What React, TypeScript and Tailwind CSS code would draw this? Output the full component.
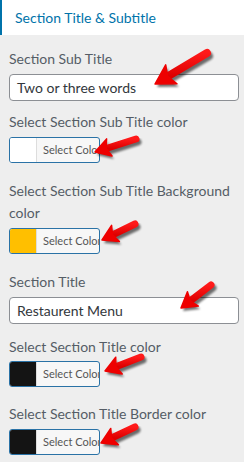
import React from "react";

type ArrowProps = { x1: number; y1: number; x2: number; y2: number; w: number; hw: number; hl: number };

function arrowPaths({ x1, y1, x2, y2, w, hw, hl }: ArrowProps) {
  const dx = x2 - x1;
  const dy = y2 - y1;
  const len = Math.hypot(dx, dy);
  const ux = dx / len;
  const uy = dy / len;
  const px = -uy;
  const py = ux;
  const bx = x2 - ux * hl;
  const by = y2 - uy * hl;
  const nx = x2 - ux * (hl * 0.78);
  const ny = y2 - uy * (hl * 0.78);
  const head = `M ${x2} ${y2} L ${bx + (px * hw) / 2} ${by + (py * hw) / 2} L ${nx} ${ny} L ${bx - (px * hw) / 2} ${by - (py * hw) / 2} Z`;
  void w;
  return { head, sx: x1, sy: y1, ex: nx, ey: ny };
}

function Arrow(p: ArrowProps) {
  const a = arrowPaths(p);
  return (
    <g>
      <g transform="translate(2 3)" opacity="0.55" filter="url(#blur)">
        <line x1={a.sx} y1={a.sy} x2={a.ex} y2={a.ey} stroke="#000" strokeWidth={p.w} strokeLinecap="round" />
        <path d={a.head} fill="#000" />
      </g>
      <line x1={a.sx} y1={a.sy} x2={a.ex} y2={a.ey} stroke="url(#red)" strokeWidth={p.w} strokeLinecap="round" />
      <path d={a.head} fill="#ee0000" stroke="#ee0000" strokeWidth="1.5" strokeLinejoin="round" />
    </g>
  );
}

function Label({ children, className = "" }: { children: React.ReactNode; className?: string }) {
  return <div className={`text-[14px] leading-[22px] text-[#555d66] ${className}`}>{children}</div>;
}

function TextInput({ value }: { value: string }) {
  return (
    <div className="h-[27px] w-[230px] rounded-[4px] border border-[#8c8f94] bg-white px-[7px] text-[14px] leading-[25px] text-[#32373c]">
      {value}
    </div>
  );
}

function ColorButton({ color }: { color: string }) {
  return (
    <div className="flex h-[26px] w-[91px] overflow-hidden rounded-[3px] border border-[#2a72a6] bg-[#f7f7f7]">
      <div className="w-[27px] shrink-0 border-r border-[#dddddd]" style={{ backgroundColor: color }} />
      <div className="whitespace-nowrap pl-[6px] text-[11px] leading-[24px] text-[#555555]">Select Color</div>
    </div>
  );
}

export default function App() {
  return (
    <div
      className="relative h-[462px] w-[244px] overflow-hidden bg-[#eeeeee]"
      style={{ fontFamily: 'Lato, "Noto Sans", sans-serif' }}
    >
      <div className="flex h-[35px] items-center border-l-2 border-[#0073aa] bg-white pl-[13px] text-[14px] text-[#0073aa]">
        Section Title &amp; Subtitle
      </div>
      <div className="px-[9px]">
        <Label className="mt-[13px] mb-[4px]">Section Sub Title</Label>
        <TextInput value="Two or three words" />
        <Label className="mt-[10px] mb-[4px]">Select Section Sub Title color</Label>
        <ColorButton color="#ffffff" />
        <Label className="mt-[17px] mb-[4px]">Select Section Sub Title Background color</Label>
        <ColorButton color="#ffbf00" />
        <Label className="mt-[17px] mb-[4px]">Section Title</Label>
        <TextInput value="Restaurent Menu" />
        <Label className="mt-[12px] mb-[3px]">Select Section Title color</Label>
        <ColorButton color="#141414" />
        <Label className="mt-[16px] mb-[4px]">Select Section Title Border color</Label>
        <ColorButton color="#141414" />
      </div>
      <svg className="pointer-events-none absolute inset-0" width="244" height="462" viewBox="0 0 244 462">
        <defs>
          <filter id="blur" x="-20%" y="-20%" width="140%" height="140%">
            <feGaussianBlur stdDeviation="1.2" />
          </filter>
          <linearGradient id="red" x1="0" y1="0" x2="0" y2="1">
            <stop offset="0" stopColor="#ff1a1a" />
            <stop offset="1" stopColor="#dd0000" />
          </linearGradient>
        </defs>
        <Arrow x1={207} y1={53} x2={155} y2={84} w={8} hw={22} hl={19} />
        <Arrow x1={136} y1={139} x2={95} y2={152} w={7} hw={18} hl={15} />
        <Arrow x1={135} y1={224} x2={102} y2={240} w={7} hw={18} hl={15} />
        <Arrow x1={211} y1={285} x2={181} y2={308} w={7} hw={18} hl={15} />
        <Arrow x1={141} y1={357} x2={105} y2={371} w={7} hw={18} hl={15} />
        <Arrow x1={135} y1={427} x2={101} y2={443} w={7} hw={18} hl={15} />
      </svg>
    </div>
  );
}
